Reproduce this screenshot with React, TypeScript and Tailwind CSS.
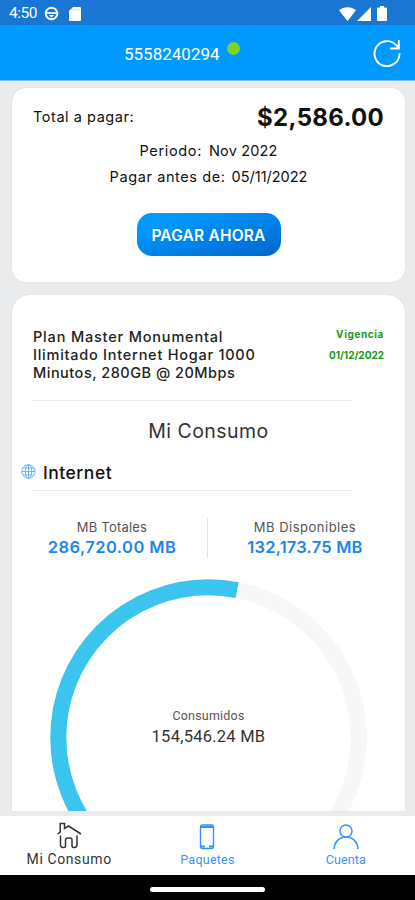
import React from "react";

interface TabProps {
    label: string;
    active?: boolean;
    className: string;
    children: React.ReactNode;
}

interface UsageProps {
    label: string;
    value: string;
    labelClass: string;
    valueClass: string;
}

function StatusBar() {
    return (
        <div className="flex h-[25px] shrink-0 items-center bg-[#1976d2] pt-[2px] pl-[9px] pr-[28px] text-white">
            <span className="w-[35px] pt-px text-[15.5px] leading-none tracking-[-0.5px]">4:50</span>
            <svg className="h-[15px] w-[15px]" viewBox="0 0 15 15" fill="none" stroke="currentColor">
                <circle cx="7.5" cy="7.5" r="5.8" strokeWidth="2" />
                <path d="M2.5 7h10" strokeWidth="1.7" />
                <path d="M4.800 9h5.400L7.500 11.500z" fill="currentColor" stroke="none" />
            </svg>
            <svg className="ml-[10px] h-[14px] w-[12px]" viewBox="0 0 12 14" fill="currentColor">
                <path d="M4 0h7a1 1 0 0 1 1 1v12a1 1 0 0 1-1 1H1a1 1 0 0 1-1-1V4z" />
                <path d="M4.5 2v2M6.8 2v2M9 2v2" stroke="#c3d9f1" strokeWidth="1" />
            </svg>
            <svg className="ml-auto h-[14px] w-[17px]" viewBox="0 0 17 14" fill="currentColor">
                <path d="M0 3.2C4.8-.9 12.2-.9 17 3.2L8.5 14z" />
            </svg>
            <svg className="ml-px h-[14px] w-[14px]" viewBox="0 0 14 14" fill="currentColor">
                <path d="M14 0v14H0z" />
            </svg>
            <svg className="ml-[6px] h-[15px] w-[10px]" viewBox="0 0 10 15" fill="currentColor">
                <path d="M3 0h4v1.5h2a1 1 0 0 1 1 1V14a1 1 0 0 1-1 1H1a1 1 0 0 1-1-1V2.5a1 1 0 0 1 1-1h2z" />
            </svg>
        </div>
    );
}

function Header() {
    return (
        <header className="flex h-[56px] shrink-0 items-center border-b border-[#7dbdf2] bg-[#0099ff] pr-[14px] pl-[124px] text-white">
            <span className="w-[96px] pt-[3px] text-[17px] leading-none">5558240294</span>
            <span className="mb-[9px] ml-[7px] h-[13px] w-[13px] rounded-full bg-[#7ed321]" />
            <svg className="ml-auto h-[28px] w-[28px]" viewBox="0 0 28 28" fill="none" stroke="currentColor" strokeWidth="1.9">
                <path d="M26.5 14A12.5 12.5 0 1 1 23.5 6.5L26 9" />
                <path d="M25.8 1v8.500H17" />
            </svg>
        </header>
    );
}

function BillCard() {
    return (
        <section className="flex h-[194px] shrink-0 flex-col rounded-[14px] bg-white px-[21px] shadow-[0_0_1px_#c4c7c9]">
            <div className="flex h-[58px] items-center justify-between">
                <span className="text-[14.5px] leading-[20px] tracking-[0.55px]">Total a pagar:</span>
                <span className="pt-px text-[24px] font-bold tracking-[0.3px]">$2,586.00</span>
            </div>
            <p className="flex h-[9px] items-center justify-center gap-[7px] text-[14.5px]">
                <span className="tracking-[0.65px]">Periodo:</span>
                <span className="tracking-[0.15px]">Nov 2022</span>
            </p>
            <p className="mt-[17px] flex h-[9px] items-center justify-center gap-[6px] text-[14.5px]">
                <span className="tracking-[0.6px]">Pagar antes de:</span>
                <span>05/11/2022</span>
            </p>
            <button className="mx-auto mt-[32px] h-[43px] w-[144px] rounded-[15px] bg-linear-to-br from-[#0099ff] from-20% to-[#0066cc] pt-[2px] text-[15.5px] font-semibold tracking-[0.2px] text-white">
                PAGAR AHORA
            </button>
        </section>
    );
}

function Usage({ label, value, labelClass, valueClass }: UsageProps) {
    return (
        <div className="flex flex-1 flex-col items-center">
            <span className={`leading-[20px] text-[#555] ${labelClass}`}>{label}</span>
            <span className={`leading-[20px] font-semibold text-[#1a86f0] ${valueClass}`}>{value}</span>
        </div>
    );
}

function UsageRing() {
    return (
        <div className="relative h-[317px] w-[317px] shrink-0">
            <svg viewBox="0 0 317 317" className="h-full w-full" fill="none" strokeWidth="16">
                <circle cx="158.5" cy="158.5" r="150.2" stroke="#f5f7f8" />
                {/* starts at the bottom and runs clockwise */}
                <circle
                    cx="158.5"
                    cy="158.5"
                    r="150.2"
                    stroke="#3bc5ee"
                    pathLength="360"
                    strokeDasharray="191 360"
                    transform="rotate(90 158.5 158.5)"
                />
            </svg>
            <div className="absolute inset-x-0 top-[127px] flex flex-col items-center font-[Roboto,sans-serif]">
                <span className="text-[12.5px] leading-[20px] tracking-[0.2px] text-[#555]">Consumidos</span>
                <span className="text-[16.5px] leading-[21px] tracking-[0.25px] text-[#333]">154,546.24 MB</span>
            </div>
        </div>
    );
}

function PlanCard() {
    return (
        <section className="flex h-[516px] shrink-0 flex-col overflow-hidden rounded-t-[18px] bg-white shadow-[0_0_1px_#c4c7c9]">
            <div className="flex h-[105px] shrink-0 justify-between pt-[33px] pr-[21px] pl-[21px]">
                <div className="text-[14.5px] leading-[18px] font-medium text-[#222]">
                    <p className="tracking-[0.82px]">Plan Master Monumental</p>
                    <p className="tracking-[0.75px]">Ilimitado Internet Hogar 1000</p>
                    <p className="tracking-[0.5px]">Minutos, 280GB @ 20Mbps</p>
                </div>
                <div className="-mt-[4px] text-right text-[10px] leading-[21px] font-bold text-[#149b14]">
                    <p className="tracking-[0.6px]">Vigencia</p>
                    <p>01/12/2022</p>
                </div>
            </div>
            <div className="ml-[21px] h-px w-[319px] shrink-0 bg-[#e9eaeb]" />
            <h2 className="flex h-[60px] shrink-0 items-center justify-center pt-[2px] text-[19.5px] tracking-[0.45px] text-[#333]">
                Mi Consumo
            </h2>
            <div className="flex h-[29px] shrink-0 items-start pl-[9px]">
                <svg className="mt-[3px] h-[15px] w-[15px]" viewBox="0 0 15 15" fill="none" stroke="#68aafa" strokeWidth="0.9">
                    <circle cx="7.5" cy="7.5" r="6.7" />
                    <ellipse cx="7.5" cy="7.5" rx="3.3" ry="6.7" />
                    <path d="M.8 7.5h13.4M7.500.8v13.4M2 4h11M2 11h11" />
                </svg>
                <h3 className="ml-[7px] pt-px text-[17.5px] leading-[22px] font-medium tracking-[0.5px] text-[#111]">
                    Internet
                </h3>
            </div>
            <div className="ml-[21px] h-px w-[319px] shrink-0 bg-[#e9eaeb]" />
            <div className="mt-[26px] flex h-[62px] shrink-0 pl-[4px]">
                <Usage
                    label="MB Totales"
                    value="286,720.00 MB"
                    labelClass="text-[13px] tracking-[0.2px]"
                    valueClass="text-[16.5px] tracking-[0.45px]"
                />
                <div className="mt-px mr-px -ml-px h-[40px] w-px bg-[#e3e5e6]" />
                <div className="flex flex-1 pr-[4px]">
                    <Usage
                        label="MB Disponibles"
                        value="132,173.75 MB"
                        labelClass="text-[13px] tracking-[0.5px]"
                        valueClass="text-[16.5px] tracking-[0.2px]"
                    />
                </div>
            </div>
            <div className="flex justify-center">
                <UsageRing />
            </div>
        </section>
    );
}

function Tab({ label, active, className, children }: TabProps) {
    return (
        <div className={`flex flex-1 flex-col items-center ${active ? "text-[#333]" : "text-[#3b91f5]"}`}>
            {children}
            <span className={className}>{label}</span>
        </div>
    );
}

function TabBar() {
    return (
        <nav className="flex h-[59px] shrink-0 bg-white pt-[5px] font-[Roboto,sans-serif]">
            <Tab label="Mi Consumo" active className="text-[14px] leading-[19px] tracking-[0.6px]">
                <svg className="h-[29px] w-[28px]" viewBox="0 0 28 29" fill="none" stroke="currentColor" strokeWidth="1.5">
                    <path d="M2.5 13L5.2 11V2.500H9.500v5L13.5 5 26 13" />
                    <path d="M5.500 14.500v9q0 3 2.500 3h1q1.500 0 1.500-2V19q0-2 2-2h2.500q2 0 2 2v5.500q0 2 1.500 2h1q2.500 0 2.500-3v-9" />
                </svg>
            </Tab>
            <Tab label="Paquetes" className="text-[12.5px] leading-[20px] tracking-[0.25px]">
                <svg className="h-[29px] w-[28px]" viewBox="0 0 28 29" fill="none" stroke="currentColor" strokeWidth="1.4">
                    <rect x="7.5" y="4" width="13" height="23.5" rx="2" />
                    <path d="M7.5 6h13M7.5 25.5h4.5M16 25.5h4.5" strokeWidth="2" />
                </svg>
            </Tab>
            <Tab label="Cuenta" className="text-[12.5px] leading-[20px] tracking-[0.15px]">
                <svg className="h-[29px] w-[28px]" viewBox="0 0 28 29" fill="none" stroke="currentColor" strokeWidth="1.5">
                    <circle cx="14" cy="10" r="6" />
                    <path d="M2 28c.5-7 5-12 12-12s11.5 5 12 12" />
                </svg>
            </Tab>
        </nav>
    );
}

export default function App() {
    return (
        <div className="flex h-[900px] w-[415px] flex-col overflow-hidden bg-[#e9ebec] font-[Roboto,sans-serif]">
            <StatusBar />
            <Header />
            <main className="flex h-[735px] shrink-0 flex-col gap-[13px] pt-[7px] pr-[10px] pl-[12px] font-[Inter,sans-serif] text-[#111]">
                <BillCard />
                <PlanCard />
            </main>
            <TabBar />
            <div className="flex h-[25px] justify-center bg-black pt-[12px]">
                <div className="h-[5px] w-[115px] rounded-full bg-white" />
            </div>
        </div>
    );
}
